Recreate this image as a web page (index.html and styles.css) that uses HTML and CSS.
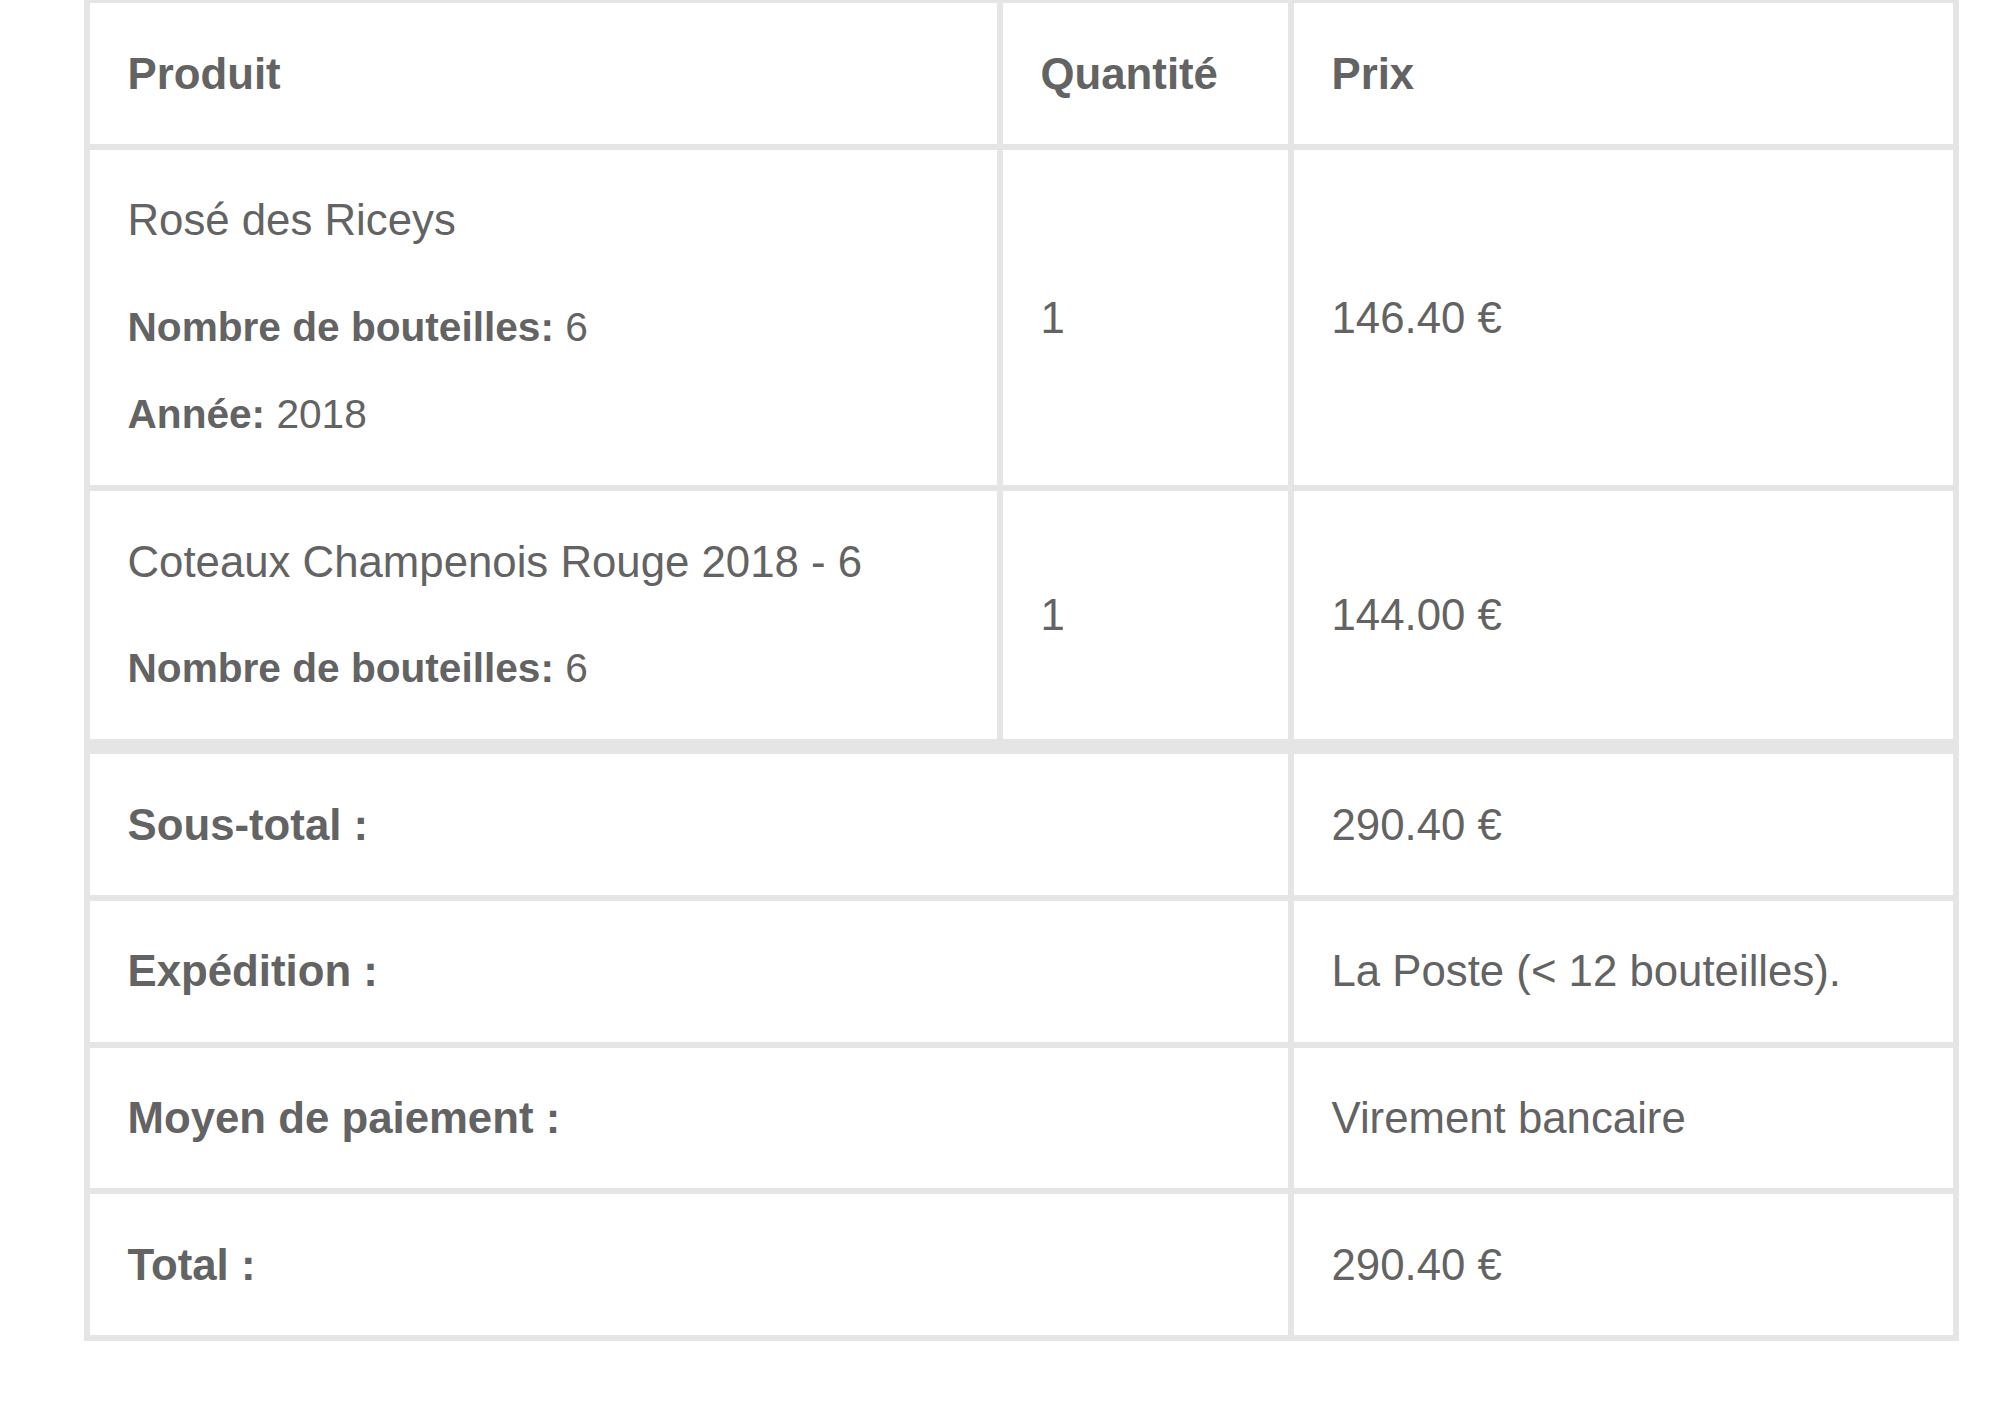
FILE: index.html
```html
<!DOCTYPE html>
<html lang="fr">
<head>
<meta charset="utf-8">
<title>Commande</title>
<link rel="stylesheet" href="styles.css">
</head>
<body>
<div class="order">
  <table class="order-table">
    <colgroup>
      <col class="col-product">
      <col class="col-qty">
      <col class="col-price">
    </colgroup>
    <thead>
      <tr>
        <th class="cell">Produit</th>
        <th class="cell">Quantité</th>
        <th class="cell">Prix</th>
      </tr>
    </thead>
    <tbody>
      <tr>
        <td class="cell">Rosé des Riceys
          <ul class="item-meta">
            <li><strong>Nombre de bouteilles:</strong> 6</li>
            <li><strong>Année:</strong> 2018</li>
          </ul>
        </td>
        <td class="cell">1</td>
        <td class="cell">146.40 €</td>
      </tr>
      <tr>
        <td class="cell">Coteaux Champenois Rouge 2018 - 6
          <ul class="item-meta">
            <li><strong>Nombre de bouteilles:</strong> 6</li>
          </ul>
        </td>
        <td class="cell">1</td>
        <td class="cell">144.00 €</td>
      </tr>
    </tbody>
    <tfoot>
      <tr class="first">
        <th class="cell" colspan="2">Sous-total :</th>
        <td class="cell">290.40 €</td>
      </tr>
      <tr>
        <th class="cell" colspan="2">Expédition :</th>
        <td class="cell">La Poste (&lt; 12 bouteilles).</td>
      </tr>
      <tr>
        <th class="cell" colspan="2">Moyen de paiement :</th>
        <td class="cell">Virement bancaire</td>
      </tr>
      <tr>
        <th class="cell" colspan="2">Total :</th>
        <td class="cell">290.40 €</td>
      </tr>
    </tfoot>
  </table>
</div>
</body>
</html>
```
FILE: styles.css
```css
html, body {
  margin: 0;
  padding: 0;
  background: #ffffff;
}

body {
  font-family: "Liberation Sans", Arial, Helvetica, sans-serif;
  color: #636363;
}

.order {
  padding-left: 84px;
  margin-top: -3px;
}

.order-table {
  width: 1875px;
  table-layout: fixed;
  border-collapse: separate;
  border-spacing: 0;
  border: 3px solid #e5e5e5;
  font-size: 43.75px;
  line-height: 65.625px;
}

.col-product { width: 913px; }
.col-qty { width: 291px; }
.col-price { width: 665px; }

.cell {
  border: 3px solid #e5e5e5;
  padding: 37.5px;
  text-align: left;
  vertical-align: middle;
  color: #636363;
}

th.cell {
  font-weight: bold;
}

td.cell {
  font-weight: normal;
}

tfoot tr.first .cell {
  border-top-width: 12px;
}

.item-meta {
  font-size: 40.625px;
  margin: 42px 0 0;
  padding: 0;
  list-style: none;
}

.item-meta li {
  margin: 21.5px 0 0;
  padding: 0;
}

.item-meta strong {
  font-weight: bold;
}
```
